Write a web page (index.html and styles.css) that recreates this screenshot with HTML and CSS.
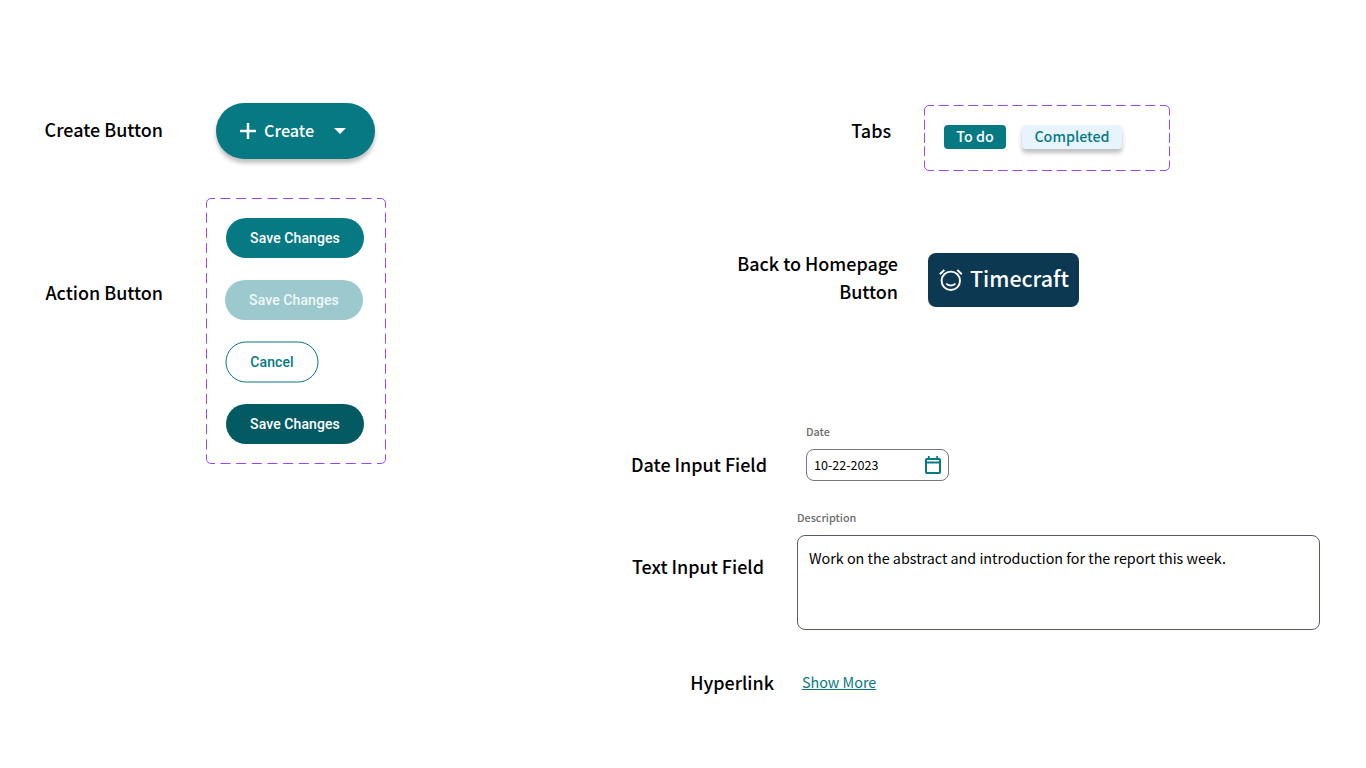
FILE: index.html
```html
<!DOCTYPE html>
<html lang="en">
<head>
<meta charset="utf-8">
<title>Buttons and inputs</title>
<link rel="stylesheet" href="styles.css">
</head>
<body>
<main class="board">
  <section class="column column-left">
    <div class="row row-create">
      <h2 class="label label-create">Create Button</h2>
      <button class="create">
        <svg class="plus" width="16" height="16" viewBox="0 0 16 16"><path d="M8 0v16M0 8h16" stroke="#fff" stroke-width="2.5"/></svg>
        <span class="create-text">Create</span>
        <svg class="caret" width="12" height="6" viewBox="0 0 12 6"><path d="M0 0h12L6 6z" fill="#fff"/></svg>
      </button>
    </div>
    <div class="row row-action">
      <h2 class="label label-action">Action Button</h2>
      <div class="variants variants-action">
        <svg class="outline" width="180" height="266" viewBox="0 0 180 266">
          <path d="M9 .5H5A4.500 4.500 0 0 0 .5 5V9.700M171 .5H175A4.500 4.500 0 0 1 179.500 5V9.700M9 265.500H5A4.500 4.500 0 0 1 .5 261V256.300M171 265.500H175A4.500 4.500 0 0 0 179.500 261V256.300"/>
          <path d="M14.500 .5H165.500M14.500 265.500H165.500" stroke-dasharray="10 5.667"/>
          <path d="M.5 14.700V251.300M179.500 14.700V251.300" stroke-dasharray="10 5.107"/>
        </svg>
        <button class="pill pill-save">Save Changes</button>
        <button class="pill pill-disabled">Save Changes</button>
        <button class="pill pill-cancel">
          <svg class="cancel-ring" width="94" height="42" viewBox="0 0 94 42"><rect x="1" y="1" width="92" height="40" rx="20" fill="none" stroke="#067983"/></svg>
          Cancel
        </button>
        <button class="pill pill-pressed">Save Changes</button>
      </div>
    </div>
  </section>
  <section class="column column-right">
    <div class="row row-tabs">
      <h2 class="label label-tabs">Tabs</h2>
      <div class="variants variants-tabs">
        <svg class="outline" width="246" height="66" viewBox="0 0 246 66">
          <path d="M10 .5H5A4.500 4.500 0 0 0 .5 5V10.500M236 .5H241A4.500 4.500 0 0 1 245.500 5V10.500M10 65.500H5A4.500 4.500 0 0 1 .5 61V55.500M236 65.500H241A4.500 4.500 0 0 0 245.500 61V55.500"/>
          <path d="M14.700 .5H231.300M14.700 65.500H231.300" stroke-dasharray="10 4.757"/>
          <path d="M.5 14.700V51.300M245.500 14.700V51.300" stroke-dasharray="10 3.300"/>
        </svg>
        <button class="tab tab-todo"><span class="todo-text">To do</span></button>
        <button class="tab tab-completed"><span class="completed-text">Completed</span></button>
      </div>
    </div>
    <div class="row row-home">
      <h2 class="label label-home">Back to Homepage<br>Button</h2>
      <button class="home">
        <svg class="clock" width="24" height="24" viewBox="0 0 24 24" fill="none" stroke="#fff" stroke-width="1.900"><circle cx="11.800" cy="12.800" r="9.200"/><path d="M.8 6.200 5.300 2M22.800 6.200 18.300 2"/><path d="M7.300 15.500c1.700 2.700 7.300 2.700 9 0"/></svg>
        <span class="home-text">Timecraft</span>
      </button>
    </div>
    <div class="row row-date">
      <h2 class="label label-date">Date Input Field</h2>
      <div class="field">
        <span class="caption">Date</span>
        <div class="date-box">
          <span class="date-text">10-22-2023</span>
          <svg class="calendar" width="16" height="18" viewBox="0 0 16 18" fill="none" stroke="#067983" stroke-width="2"><rect x="1" y="3" width="14" height="14" rx=".8"/><path d="M0 6.500h16"/><path d="M3.800 0v3M12.200 0v3" stroke-width="1.800"/></svg>
        </div>
      </div>
    </div>
    <div class="row row-text">
      <h2 class="label label-text">Text Input Field</h2>
      <div class="field">
        <span class="caption">Description</span>
        <div class="text-box"><span class="body-text">Work on the abstract and introduction for the report this week.</span></div>
      </div>
    </div>
    <div class="row row-link">
      <h2 class="label label-link">Hyperlink</h2>
      <a class="link" href="#">Show More</a>
    </div>
  </section>
</main>
</body>
</html>
```
FILE: styles.css
```css
* { box-sizing: border-box; }
body { margin: 0; background: #fff; color: #000; font-family: "Noto Sans CJK SC", "Noto Sans", sans-serif; }
button { font: inherit; border: 0; padding: 0; display: flex; align-items: center; }
svg { flex: none; display: block; }
.board { display: flex; width: 1366px; height: 768px; overflow: hidden; }
.column-left { width: 620px; padding-top: 103px; }
.column-right { width: 746px; padding-top: 105px; }
.row { display: flex; white-space: nowrap; }
.label { margin: 0; font-size: 17.95px; font-weight: 500; line-height: 28px; text-align: right; flex: none; }

.row-create { height: 56px; }
.label-create, .label-action { width: 163px; }
.label-create { padding-top: 12px; }
.create { margin-left: 53px; width: 159px; height: 56px; padding-left: 24px; border-radius: 28px; background: #067983; color: #fff; box-shadow: 0 4px 4px rgba(0, 0, 0, .25); }
.create-text { width: 50px; margin-left: 8px; padding-bottom: 2px; font-size: 16.2px; font-weight: 500; line-height: 24px; }
.caret { margin-left: 20px; }

.row-action { margin-top: 39px; }
.label-action { padding-top: 80px; }
.variants { position: relative; }
.outline { position: absolute; inset: 0; fill: none; stroke: #9747ff; }
.variants-action { margin-left: 43px; width: 180px; height: 266px; padding: 20px; display: flex; flex-direction: column; gap: 22px; }
.pill { height: 40px; width: 138px; justify-content: center; border-radius: 20px; background: #067983; color: #fff; font: 500 14px/20px Roboto, sans-serif; letter-spacing: .1px; }
.pill-disabled { background: #9bc9cd; color: #f0f7f8; margin-left: -1px; }
.pill-cancel { position: relative; width: 94px; height: 42px; margin: -1px; background: none; color: #067983; }
.cancel-ring { position: absolute; inset: 0; }
.pill-pressed { background: #045a62; }

.row-tabs { height: 66px; }
.label-tabs { width: 271px; padding-top: 11px; }
.variants-tabs { margin-left: 33px; width: 246px; padding: 20px; display: flex; gap: 16px; }
.tab { height: 24px; padding-bottom: 2px; border-radius: 4px; justify-content: center; font-size: 14.3px; font-weight: 500; line-height: 24px; }
.tab-todo { width: 62px; background: #067983; color: #fff; }
.tab-completed { width: 100px; background: #e8f4fd; color: #067983; box-shadow: 0 4px 4px rgba(0, 0, 0, .25); }

.row-home { margin-top: 78px; height: 58px; }
.label-home { width: 278px; }
.home { margin: 4px 0 0 30px; width: 151px; height: 54px; padding-left: 11px; border-radius: 8px; background: #0c3852; color: #fff; }
.home-text { margin-left: 7px; padding-bottom: 4px; font-size: 21.4px; font-weight: 500; line-height: 30px; }

.row-date { margin-top: 117px; height: 57px; }
.label-date { width: 147px; padding-top: 26px; }
.row-date .field { margin-left: 39px; }
.field { display: flex; flex-direction: column; }
.caption { font-size: 10.8px; line-height: 14px; font-weight: 500; color: #6b6b6b; }
.date-box { margin-top: 11px; width: 143px; height: 32px; padding: 0 7px; border: 1px solid #79747e; border-radius: 8px; display: flex; align-items: center; justify-content: space-between; }
.date-text { font-size: 12.55px; line-height: 20px; }
.row-text { margin-top: 29px; height: 120px; }
.label-text { width: 144px; padding-top: 42px; }
.row-text .field { margin-left: 33px; }
.text-box { margin-top: 11px; width: 523px; height: 95px; padding: 10px 11px; border: 1px solid #565a70; border-radius: 8px; }
.body-text { display: block; font-size: 14.33px; line-height: 24px; }
.row-link { margin-top: 38px; }
.label-link { width: 154px; }
.link { margin-left: 28px; color: #067983; font-size: 14.33px; line-height: 28px; text-underline-offset: 1px; text-decoration-thickness: 1px; }
```
